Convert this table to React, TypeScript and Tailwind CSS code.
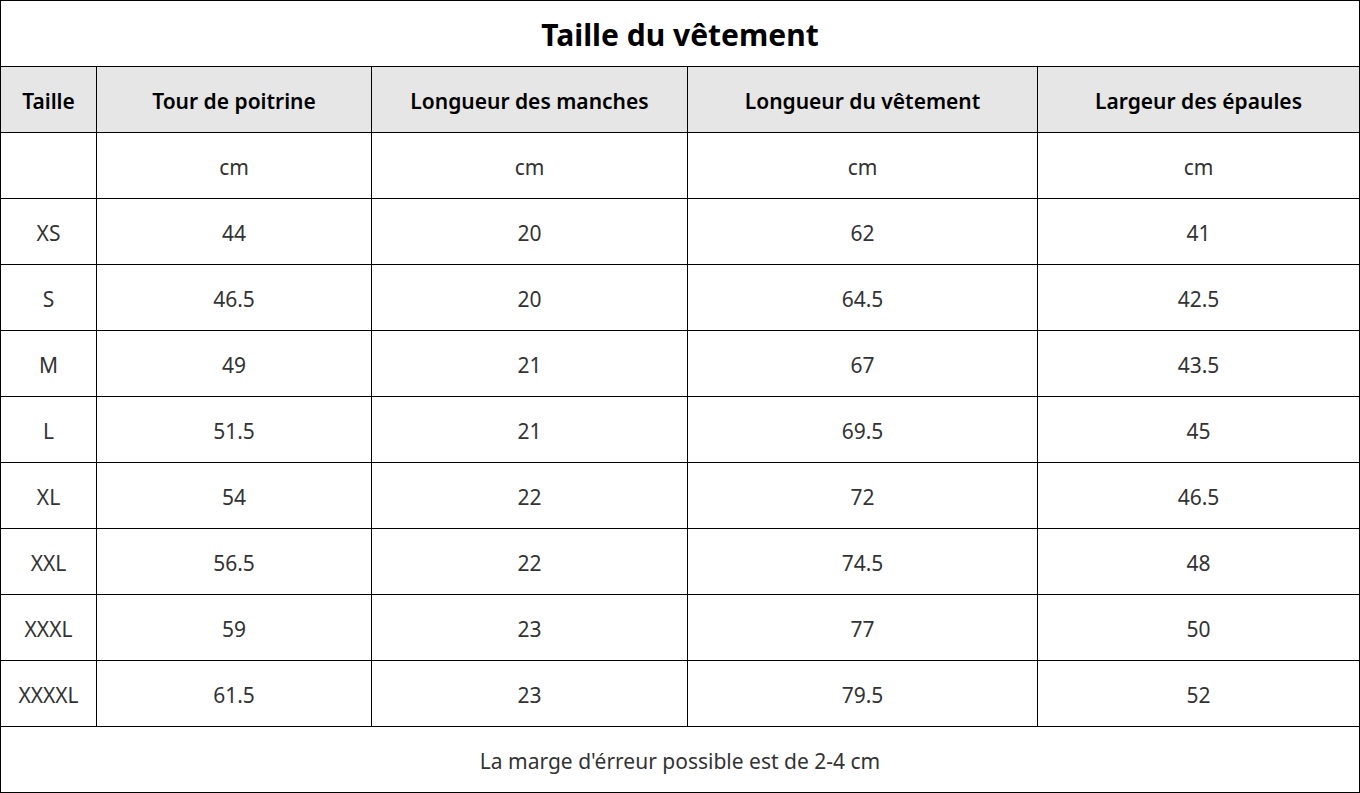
const headers = [
  "Taille",
  "Tour de poitrine",
  "Longueur des manches",
  "Longueur du vêtement",
  "Largeur des épaules",
];

const rows: string[][] = [
  ["", "cm", "cm", "cm", "cm"],
  ["XS", "44", "20", "62", "41"],
  ["S", "46.5", "20", "64.5", "42.5"],
  ["M", "49", "21", "67", "43.5"],
  ["L", "51.5", "21", "69.5", "45"],
  ["XL", "54", "22", "72", "46.5"],
  ["XXL", "56.5", "22", "74.5", "48"],
  ["XXXL", "59", "23", "77", "50"],
  ["XXXXL", "61.5", "23", "79.5", "52"],
];

export default function App() {
  return (
    <div className="w-[1360px] h-[793px] bg-white font-['Noto_Sans',sans-serif]">
      <div className="grid grid-cols-[95px_274px_315px_349px_321px] auto-rows-[65px] gap-px p-px bg-black">
        {/* Title */}
        <div className="col-span-5 bg-white flex items-center justify-center pt-[2px] text-[30px] font-bold text-black">
          Taille du vêtement
        </div>

        {/* Header */}
        {headers.map((h) => (
          <div
            key={h}
            className="bg-[#e6e6e6] flex items-center justify-center pt-[4px] text-[21px] font-semibold text-black"
          >
            {h}
          </div>
        ))}

        {/* Body */}
        {rows.map((row, r) =>
          row.map((cell, c) => (
            <div
              key={`${r}-${c}`}
              className="bg-white flex items-center justify-center pt-[4px] text-[21px] text-[#333]"
            >
              {cell}
            </div>
          ))
        )}

        {/* Footer */}
        <div className="col-span-5 bg-white flex items-center justify-center pt-[4px] text-[21px] text-[#333]">
          La marge d'érreur possible est de 2-4 cm
        </div>
      </div>
    </div>
  );
}
